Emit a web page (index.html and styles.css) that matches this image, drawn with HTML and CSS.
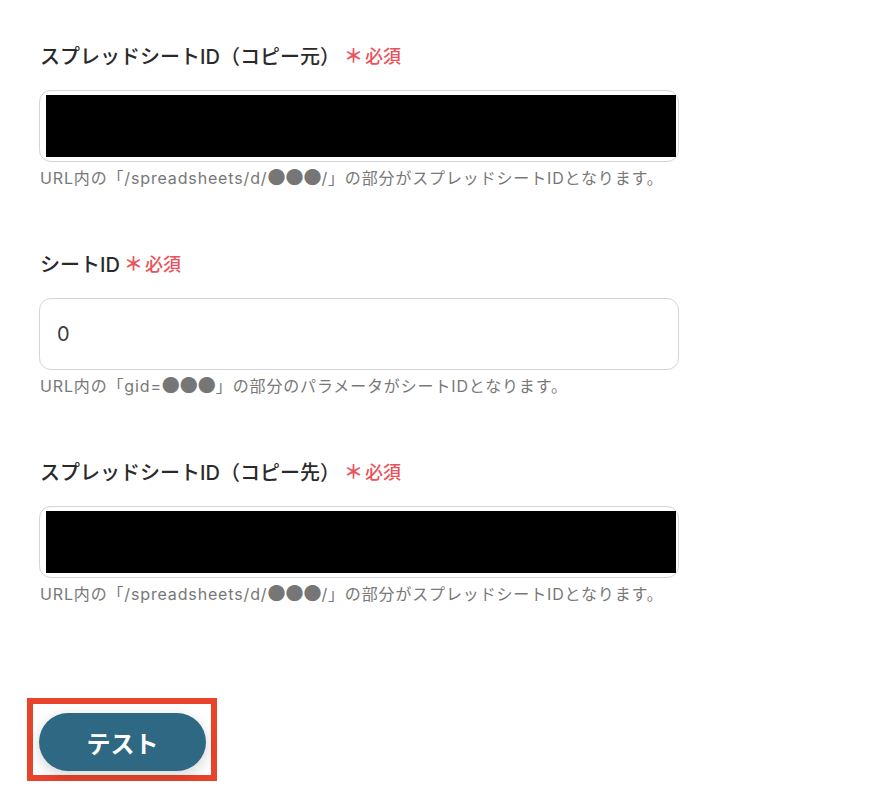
FILE: index.html
```html
<!DOCTYPE html>
<html lang="ja">
<head>
<meta charset="utf-8">
<title>Form</title>
<link rel="stylesheet" href="styles.css">
</head>
<body>
<main class="form">
  <section class="field">
    <div class="label">スプレッドシートID（コピー元）<span class="req"><span class="ast">＊</span>必須</span></div>
    <div class="input"><div class="redact"></div></div>
    <p class="help">URL内の「/spreadsheets/d/<span class="dots">●●●</span>/」の部分がスプレッドシートIDとなります。</p>
  </section>
  <section class="field">
    <div class="label">シートID<span class="req"><span class="ast">＊</span>必須</span></div>
    <div class="input"><span class="value">0</span></div>
    <p class="help">URL内の「gid=<span class="dots">●●●</span>」の部分のパラメータがシートIDとなります。</p>
  </section>
  <section class="field">
    <div class="label">スプレッドシートID（コピー先）<span class="req"><span class="ast">＊</span>必須</span></div>
    <div class="input"><div class="redact"></div></div>
    <p class="help">URL内の「/spreadsheets/d/<span class="dots">●●●</span>/」の部分がスプレッドシートIDとなります。</p>
  </section>
  <div class="frame">
    <button class="btn">テスト</button>
  </div>
</main>
</body>
</html>
```
FILE: styles.css
```css
html, body {
  margin: 0;
  padding: 0;
  background: #ffffff;
}
body {
  font-family: "Inter", "Noto Sans CJK JP", sans-serif;
  color: #2b2b2b;
}
.form {
  padding: 43px 0 0 39px;
  width: 640px;
  display: flex;
  flex-direction: column;
}
.field {
  display: flex;
  flex-direction: column;
  margin-bottom: 62px;
}
.label {
  font-size: 20px;
  line-height: 28px;
  font-weight: 500;
  padding-left: 1px;
  color: #2a2a2a;
  display: flex;
  align-items: center;
}
.req {
  color: #e9535b;
  font-size: 18px;
  font-weight: 500;
  margin-left: 4px;
  display: flex;
  align-items: center;
}
.ast {
  font-size: 19px;
  font-weight: 700;
  margin-right: 2px;
}
.input {
  margin-top: 19px;
  height: 72px;
  box-sizing: border-box;
  border: 1px solid #d3d3db;
  border-radius: 12px;
  display: flex;
  align-items: center;
  padding: 4px 2px 4px 6px;
}
.redact {
  background: #000;
  width: 100%;
  height: 62px;
}
.value {
  font-size: 20px;
  padding-left: 11px;
  color: #3a3a3a;
}
.help {
  margin: 5px 0 0 1px;
  font-size: 16px;
  line-height: 22px;
  height: 22px;
  letter-spacing: 0.85px;
  color: #787878;
}
.dots {
  font-family: "Noto Sans CJK JP", sans-serif;
  font-size: 18px;
  line-height: 0;
  letter-spacing: 0;
  color: #767676;
}
.frame {
  margin: 31px 0 0 -12px;
  width: 190px;
  height: 83px;
  box-sizing: border-box;
  border: 6px solid #e8432b;
  padding: 9px 0 0 6px;
}
.btn {
  width: 167px;
  height: 58px;
  border: none;
  border-radius: 29px;
  background: #2e6882;
  color: #ffffff;
  font-family: "Inter", "Noto Sans CJK JP", sans-serif;
  font-size: 24px;
  font-weight: 600;
  box-shadow: 0 4px 14px rgba(0, 0, 0, 0.18);
  padding: 0;
}
```
